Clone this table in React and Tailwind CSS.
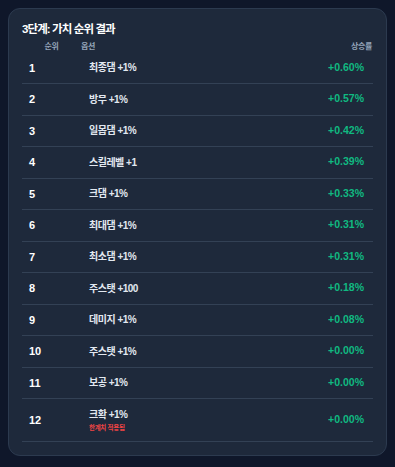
import React from "react";

const rows = [
  ["1", "최종댐 +1%", "+0.60%"],
  ["2", "방무 +1%", "+0.57%"],
  ["3", "일몹댐 +1%", "+0.42%"],
  ["4", "스킬레벨 +1", "+0.39%"],
  ["5", "크댐 +1%", "+0.33%"],
  ["6", "최대댐 +1%", "+0.31%"],
  ["7", "최소댐 +1%", "+0.31%"],
  ["8", "주스탯 +100", "+0.18%"],
  ["9", "데미지 +1%", "+0.08%"],
  ["10", "주스탯 +1%", "+0.00%"],
  ["11", "보공 +1%", "+0.00%"],
];

const font = { fontFamily: '"Liberation Sans", "Noto Sans CJK KR", sans-serif' };

export default function App() {
  return (
    <div className="w-[395px] h-[467px] bg-[#0f172a] p-2" style={font}>
      <div className="rounded-xl border border-[#2c3a4f] bg-[#1e293b] p-[13px]">
        <div className="text-[11.5px] leading-[15px] font-bold text-white tracking-[-0.9px]">
          3단계: 가치 순위 결과
        </div>
        <div className="grid grid-cols-[59px_1fr_auto] h-[15.5px] pt-[4px] text-[8px] leading-[12px] font-bold text-[#94a3b8] tracking-[-0.4px]">
          <div className="text-center">순위</div>
          <div>옵션</div>
          <div className="pr-[1px]">상승률</div>
        </div>
        {rows.map(([r, name, v]) => (
          <div
            key={r}
            className="grid grid-cols-[59px_1fr_auto] items-center h-[31.5px] border-b border-[#334155]"
          >
            <div className="pl-[7px] text-[11px] font-bold text-white">{r}</div>
            <div className="pl-[8px] text-[10px] font-bold text-[#e2e8f0] tracking-[-0.5px]">{name}</div>
            <div className="pr-[9px] text-[10.5px] font-bold text-[#10b981]">{v}</div>
          </div>
        ))}
        <div className="grid grid-cols-[59px_1fr_auto] items-center h-[42.5px] border-b border-[#334155]">
          <div className="pl-[7px] text-[11px] font-bold text-white">12</div>
          <div className="pl-[8px] flex flex-col">
            <span className="text-[10px] leading-[14px] font-bold text-[#e2e8f0] tracking-[-0.5px]">크확 +1%</span>
            <span className="text-[6.5px] leading-[9px] mt-[1px] font-bold text-[#ef4444] tracking-[-0.3px]">한계치 적용됨</span>
          </div>
          <div className="pr-[9px] text-[10.5px] font-bold text-[#10b981]">+0.00%</div>
        </div>
      </div>
    </div>
  );
}
